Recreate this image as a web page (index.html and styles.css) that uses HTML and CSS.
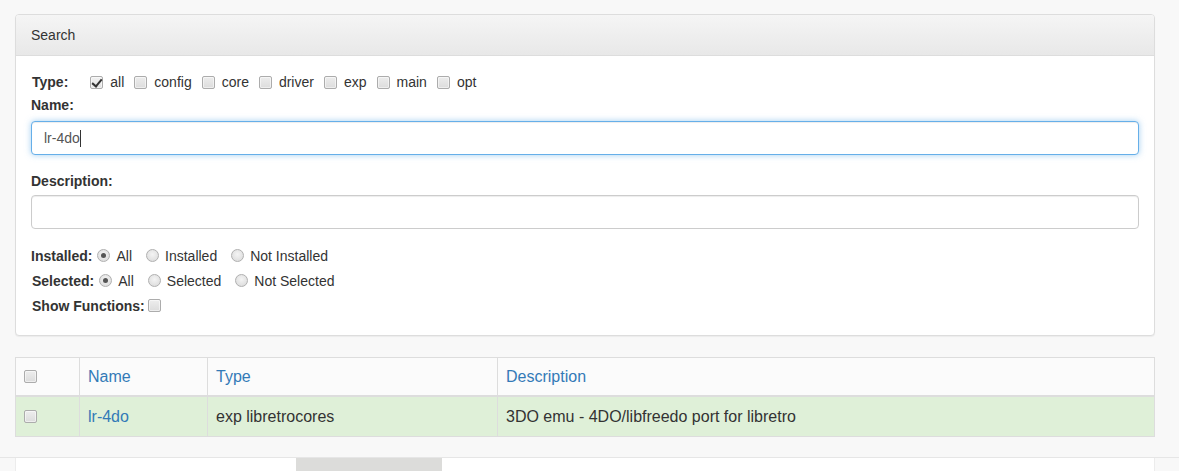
FILE: index.html
```html
<!DOCTYPE html>
<html>
<head>
<meta charset="utf-8">
<title>Search</title>
<link rel="stylesheet" href="styles.css">
</head>
<body>
<div class="page">
  <div class="panel">
    <div class="panel-heading">Search</div>
    <div class="panel-body">
      <div class="row type-row">
        <span class="lbl lbl-type">Type:</span>
        <label class="opt"><input type="checkbox" class="cb" checked><span>all</span></label>
        <label class="opt"><input type="checkbox" class="cb"><span>config</span></label>
        <label class="opt"><input type="checkbox" class="cb"><span>core</span></label>
        <label class="opt"><input type="checkbox" class="cb"><span>driver</span></label>
        <label class="opt"><input type="checkbox" class="cb"><span>exp</span></label>
        <label class="opt"><input type="checkbox" class="cb"><span>main</span></label>
        <label class="opt"><input type="checkbox" class="cb"><span>opt</span></label>
      </div>
      <div class="field-label name-label">Name:</div>
      <div class="input-wrap">
        <input type="text" class="form-control focused" value="lr-4do">
        <span class="caret"></span>
      </div>
      <div class="field-label desc-label">Description:</div>
      <div class="input-wrap desc-wrap">
        <input type="text" class="form-control" value="">
      </div>
      <div class="row radio-row installed-row">
        <span class="lbl">Installed:</span>
        <label class="ropt"><input type="radio" name="inst" class="rb" checked><span>All</span></label>
        <label class="ropt"><input type="radio" name="inst" class="rb"><span>Installed</span></label>
        <label class="ropt"><input type="radio" name="inst" class="rb"><span>Not Installed</span></label>
      </div>
      <div class="row radio-row">
        <span class="lbl lbl-indent">Selected:</span>
        <label class="ropt"><input type="radio" name="sel" class="rb" checked><span>All</span></label>
        <label class="ropt"><input type="radio" name="sel" class="rb"><span>Selected</span></label>
        <label class="ropt"><input type="radio" name="sel" class="rb"><span>Not Selected</span></label>
      </div>
      <div class="row radio-row">
        <span class="lbl lbl-indent lbl-fn">Show Functions:</span>
        <input type="checkbox" class="cb">
      </div>
    </div>
  </div>

  <table class="results">
    <colgroup>
      <col class="c-check">
      <col class="c-name">
      <col class="c-type">
      <col class="c-desc">
    </colgroup>
    <thead>
      <tr>
        <th><input type="checkbox" class="cb"></th>
        <th><a href="#">Name</a></th>
        <th><a href="#">Type</a></th>
        <th><a href="#">Description</a></th>
      </tr>
    </thead>
    <tbody>
      <tr class="success">
        <td><input type="checkbox" class="cb"></td>
        <td><a href="#">lr-4do</a></td>
        <td>exp libretrocores</td>
        <td>3DO emu - 4DO/libfreedo port for libretro</td>
      </tr>
    </tbody>
  </table>
</div>
<div class="footer">
  <div class="footer-box">
    <div class="footer-tab"></div>
  </div>
</div>
</body>
</html>
```
FILE: styles.css
```css
html, body {
  margin: 0;
  padding: 0;
}
body {
  background: #f8f8f8;
  font-family: "Liberation Sans", Arial, Helvetica, sans-serif;
  font-size: 14px;
  color: #333;
  height: 471px;
  overflow: hidden;
}
.page {
  padding: 14px 24px 0 15px;
}
.panel {
  width: 1140px;
  box-sizing: border-box;
  background: #fff;
  border: 1px solid #ddd;
  border-radius: 4px;
  box-shadow: 0 1px 1px rgba(0,0,0,.05);
}
.panel-heading {
  padding: 10px 15px;
  line-height: 20px;
  background: linear-gradient(to bottom, #f5f5f5 0%, #e8e8e8 100%);
  border-bottom: 1px solid #ddd;
  border-radius: 3px 3px 0 0;
  color: #333;
}
.panel-body {
  padding: 14px 15px 17px 15px;
}
.row {
  display: flex;
  align-items: center;
}
.type-row {
  height: 24px;
}
.lbl {
  font-weight: bold;
}
.lbl-type {
  margin-left: 1px;
  margin-right: 22px;
}
.opt {
  display: inline-flex;
  align-items: center;
  margin-right: 10px;
}
.cb {
  -webkit-appearance: none;
  appearance: none;
  width: 13px;
  height: 13px;
  margin: 0 7px 0 0;
  box-sizing: border-box;
  border: 1px solid #acacac;
  border-radius: 2px;
  background: linear-gradient(to bottom, #ededed, #dcdcdc);
  box-shadow: inset 0 0 0 1px rgba(255,255,255,.5);
  position: relative;
  flex: none;
}
.cb:checked {
  background: linear-gradient(to bottom, #f2f2f2, #e2e2e2);
}
.cb:checked::after {
  content: "";
  position: absolute;
  left: 3px;
  top: 0px;
  width: 4px;
  height: 8px;
  border: solid #333;
  border-width: 0 2px 2px 0;
  transform: rotate(40deg);
}
.field-label {
  font-weight: bold;
  height: 22px;
  line-height: 22px;
}
.desc-label {
  margin-top: 15px;
}
.input-wrap {
  position: relative;
  margin-top: 5px;
}
.desc-wrap {
  margin-top: 3px;
}
.form-control {
  display: block;
  width: 100%;
  height: 34px;
  box-sizing: border-box;
  padding: 6px 12px;
  font-family: "Liberation Sans", Arial, Helvetica, sans-serif;
  font-size: 14px;
  line-height: 20px;
  color: #555;
  background: #fff;
  border: 1px solid #ccc;
  border-radius: 4px;
  box-shadow: inset 0 1px 1px rgba(0,0,0,.075);
  outline: none;
  margin: 0;
}
.form-control.focused {
  border-color: #66afe9;
  box-shadow: inset 0 1px 1px rgba(0,0,0,.075), 0 0 6px rgba(102,175,233,.6);
}
.caret {
  position: absolute;
  left: 49px;
  top: 9px;
  width: 1px;
  height: 17px;
  background: #333;
}
.radio-row {
  height: 25px;
}
.installed-row {
  margin-top: 14px;
}
.radio-row .lbl {
  margin-right: 5px;
}
.lbl-indent {
  margin-left: 1px;
}
.radio-row .lbl-fn {
  margin-right: 3px;
}
.ropt {
  display: inline-flex;
  align-items: center;
  margin-right: 14px;
}
.rb {
  -webkit-appearance: none;
  appearance: none;
  width: 13px;
  height: 13px;
  margin: 0 6px 0 0;
  box-sizing: border-box;
  border: 1px solid #b0b0b0;
  border-radius: 50%;
  background: radial-gradient(circle at 50% 40%, #f4f4f4, #d8d8d8);
  position: relative;
  flex: none;
}
.rb:checked::after {
  content: "";
  position: absolute;
  left: 3px;
  top: 3px;
  width: 5px;
  height: 5px;
  border-radius: 50%;
  background: #555;
}
.results {
  margin-top: 21px;
  width: 1140px;
  border-collapse: collapse;
  table-layout: fixed;
  font-size: 16px;
}
.c-check { width: 64px; }
.c-name { width: 128px; }
.c-type { width: 290px; }
.results th,
.results td {
  border: 1px solid #ddd;
  padding: 0 8px;
  text-align: left;
  font-weight: normal;
  vertical-align: middle;
}
.results th {
  height: 37px;
  background: #fbfbfb;
  border-bottom: 2px solid #ddd;
}
.results td {
  height: 39px;
}
.results .cb {
  margin: 0;
  display: block;
}
.results a {
  color: #337ab7;
  text-decoration: none;
}
.results tr.success td {
  background: #dff0d8;
}
.footer {
  margin-top: 20px;
  border-top: 1px solid #e6e6e6;
  padding: 0 24px 0 15px;
}
.footer-box {
  width: 1140px;
  box-sizing: border-box;
  height: 30px;
  background: #fff;
  border-left: 1px solid #ececec;
  border-right: 1px solid #ececec;
  padding-left: 280px;
}
.footer-tab {
  width: 146px;
  height: 30px;
  background: #dcdcda;
}
```
